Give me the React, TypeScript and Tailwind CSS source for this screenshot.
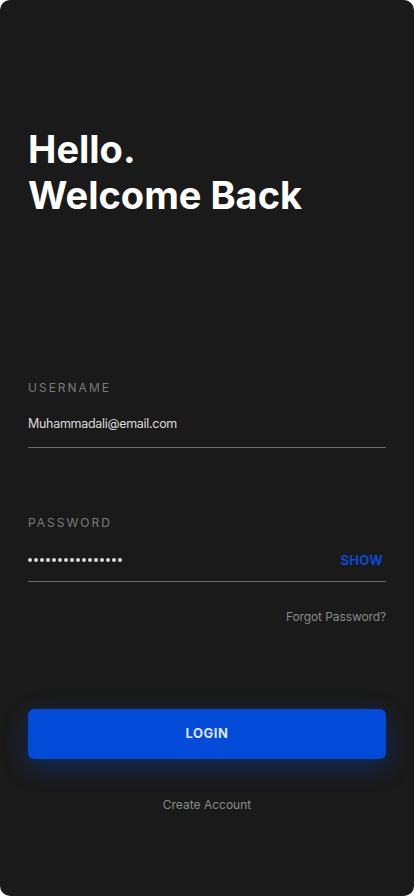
const font = { fontFamily: 'Inter, "Noto Sans", sans-serif' };

const Field = ({ label, h, children }: { label: string; h: string; children: React.ReactNode }) => (
  <div>
    <div className="text-[12px] leading-[14px] tracking-[2px] text-[#7a7a7a]">{label}</div>
    <div className={`mt-[21px] flex items-start border-b border-[#6b6b6b] ${h}`}>{children}</div>
  </div>
);

export default function App() {
  return (
    <div className="h-[896px] w-[414px] bg-white" style={font}>
      <div className="flex h-full flex-col rounded-[10px] bg-[#1a1a1a] px-[28px]">
        <h1 className="mt-[126px] text-[38px] font-bold leading-[46px] text-white">
          Hello.
          <br />
          Welcome Back
        </h1>

        <div className="mt-[163px]">
          <Field label="USERNAME" h="h-[32px]">
            <span className="text-[12.5px] leading-[16px] tracking-[-0.3px] text-[#dcdcdc]">
              Muhammadali@email.com
            </span>
          </Field>
        </div>

        <div className="mt-[68px]">
          <Field label="PASSWORD" h="h-[31px]">
            <div className="mt-[1px] flex h-[16px] flex-1 items-center gap-[2px]" aria-label="password">
              {Array.from({ length: 16 }).map((_, i) => (
                <span key={i} className="h-[4px] w-[4px] rounded-full bg-[#d8d8d8]" />
              ))}
            </div>
            <span className="mt-[1px] pr-[3px] text-[13px] font-bold leading-[16px] tracking-[0.3px] text-[#0a49d4]">
              SHOW
            </span>
          </Field>
        </div>

        <div className="mt-[27px] text-right text-[12px] leading-[16px] tracking-[-0.1px] text-[#8a8a8a]">
          Forgot Password?
        </div>

        <button className="mt-[84px] flex h-[50px] w-full items-center justify-center rounded-[6px] bg-[#024bd9] text-[13px] font-bold tracking-[0.5px] text-[#dfe5f5] shadow-[0_8px_24px_rgba(2,75,217,0.35)]">
          LOGIN
        </button>

        <div className="mt-[38px] text-center text-[12px] leading-[16px] text-[#8a8a8a]">Create Account</div>
      </div>
    </div>
  );
}
